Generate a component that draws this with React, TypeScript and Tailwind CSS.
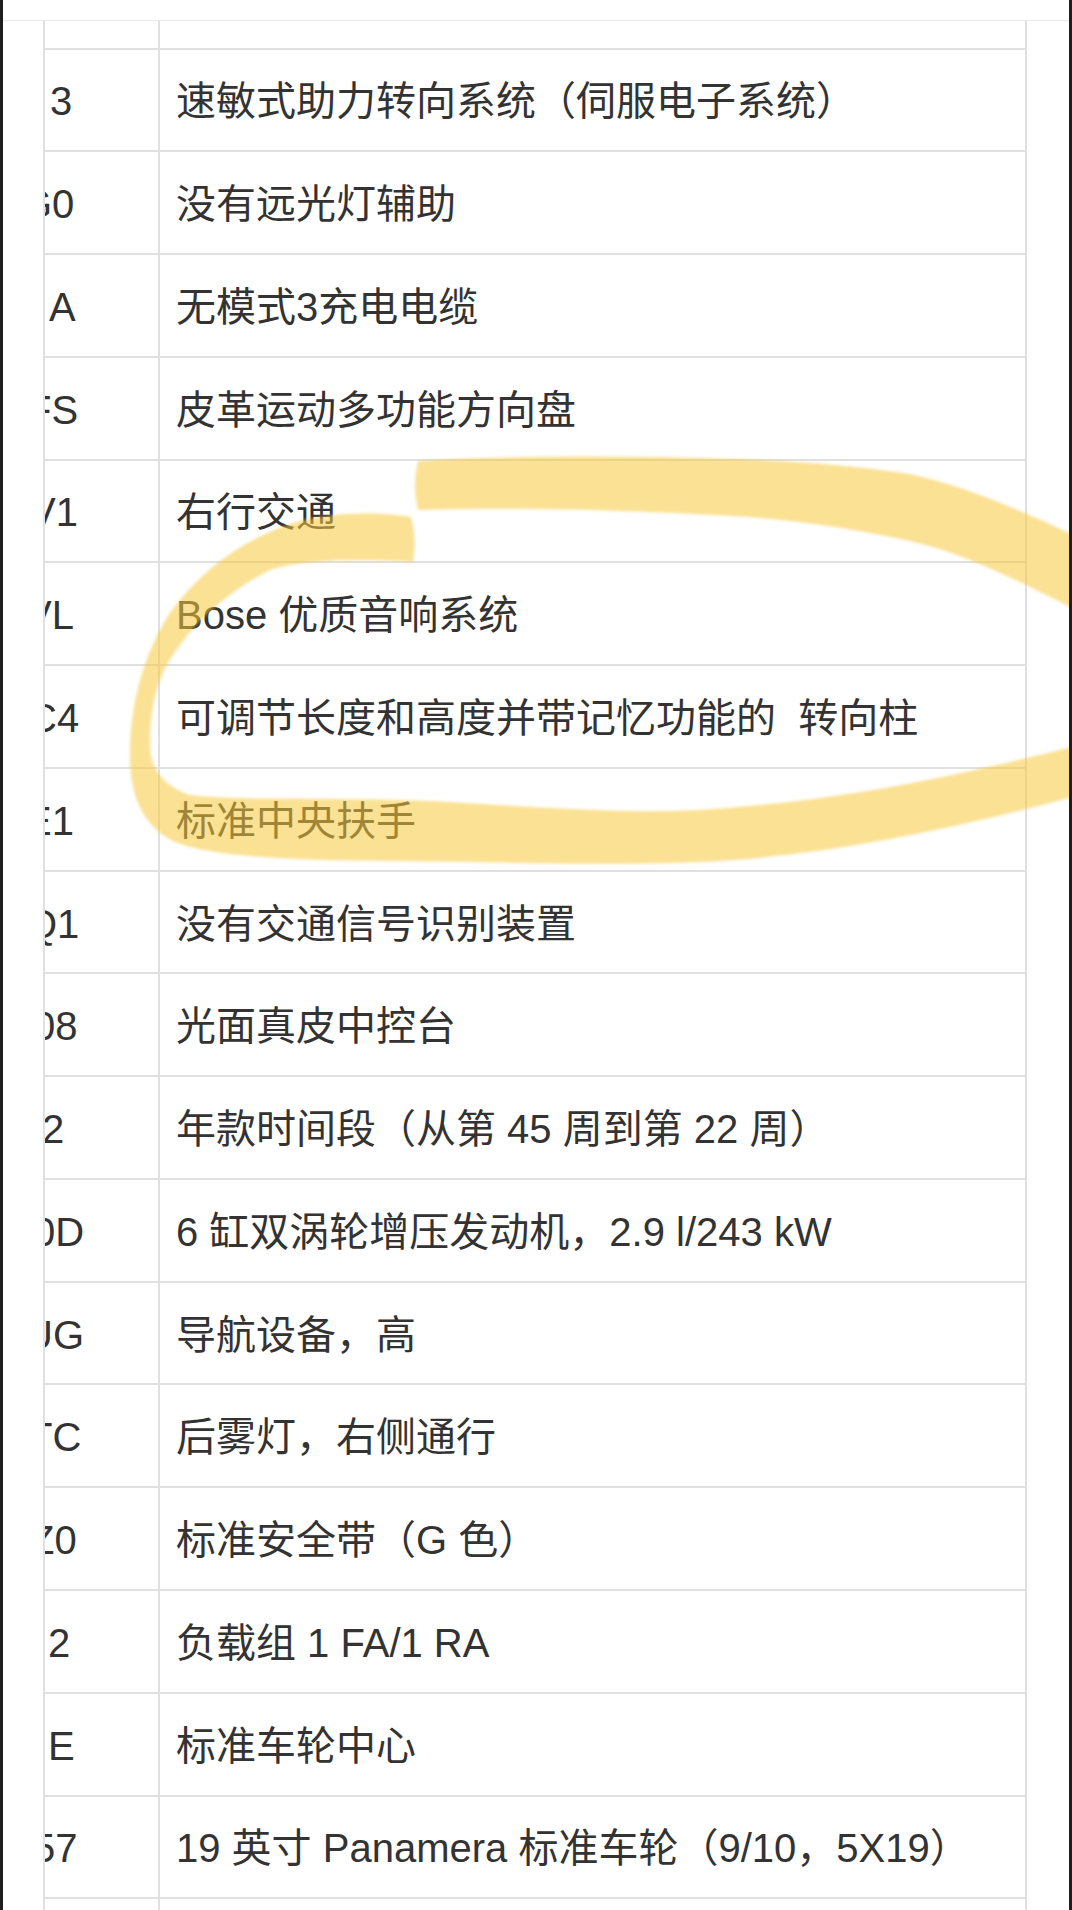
import React from 'react';

type Row = { code: string; shift: string; text: string };

const rows: Row[] = [
  { code: '3', shift: 'ml-[5px]', text: '速敏式助力转向系统（伺服电子系统）' },
  { code: 'G0', shift: 'ml-[-24px]', text: '没有远光灯辅助' },
  { code: 'A', shift: 'ml-[4px]', text: '无模式3充电电缆' },
  { code: 'FS', shift: 'ml-[-18px]', text: '皮革运动多功能方向盘' },
  { code: 'V1', shift: 'ml-[-16px]', text: '右行交通' },
  { code: 'VL', shift: 'ml-[-20px]', text: 'Bose 优质音响系统' },
  { code: 'C4', shift: 'ml-[-17px]', text: '可调节长度和高度并带记忆功能的  转向柱' },
  { code: 'E1', shift: 'ml-[-20px]', text: '标准中央扶手' },
  { code: 'Q1', shift: 'ml-[-19px]', text: '没有交通信号识别装置' },
  { code: '08', shift: 'ml-[-12px]', text: '光面真皮中控台' },
  { code: '2', shift: 'ml-[-3px]', text: '年款时间段（从第 45 周到第 22 周）' },
  { code: '0D', shift: 'ml-[-12px]', text: '6 缸双涡轮增压发动机，2.9 l/243 kW' },
  { code: 'UG', shift: 'ml-[-21px]', text: '导航设备，高' },
  { code: 'TC', shift: 'ml-[-17px]', text: '后雾灯，右侧通行' },
  { code: 'Z0', shift: 'ml-[-15px]', text: '标准安全带（G 色）' },
  { code: '2', shift: 'ml-[3px]', text: '负载组 1 FA/1 RA' },
  { code: 'E', shift: 'ml-[3px]', text: '标准车轮中心' },
  { code: '57', shift: 'ml-[-12px]', text: '19 英寸 Panamera 标准车轮（9/10，5X19）' },
];

const TableRow = ({ row, height }: { row?: Row; height: string }) => (
  <div className={`flex shrink-0 border-b-2 border-[#e0e0e0] ${height}`}>
    <div className="flex w-[115px] shrink-0 items-center overflow-hidden border-r-2 border-[#e0e0e0] pt-[3px]">
      {row && <span className={`whitespace-nowrap text-[40px] leading-none ${row.shift}`}>{row.code}</span>}
    </div>
    <div className="flex flex-1 items-center pl-[16px] pt-[3px]">
      {row && <span className="whitespace-pre text-[40px] leading-none">{row.text}</span>}
    </div>
  </div>
);

const Highlight = () => (
  <svg className="pointer-events-none absolute inset-0 h-full w-full" viewBox="0 0 1072 1910">
    <defs>
      <filter id="soft" x="-5%" y="-5%" width="110%" height="110%">
        <feGaussianBlur stdDeviation="1.6" />
      </filter>
    </defs>
    <g fill="rgb(246,200,60)" fillOpacity="0.55" filter="url(#soft)">
      <path d="M418,461 C500,456 620,455 733,459 C820,462 870,468 910,474 C960,485 1010,505 1080,538 L1080,612 C1020,582 970,555 910,541 C860,530 800,520 733,516 C620,509 500,507 418,510 Q412,486 418,461 Z" />
      <path d="M411,517 C380,512 330,511 290,524 C240,541 200,572 172,610 C145,650 131,700 130,750 C129,795 142,826 175,842 C215,858 300,860 400,861 C500,862 600,866 700,862 C820,857 950,830 1080,795 L1080,745 C960,775 850,800 700,810 C600,815 500,803 400,800 C300,798 230,800 190,795 C160,785 150,765 150,745 C150,700 160,670 180,645 C205,610 240,585 270,570 C300,560 360,558 413,562 Q417,540 411,517 Z" />
    </g>
  </svg>
);

export default function App() {
  return (
    <div className="relative flex h-[1910px] w-[1072px] overflow-hidden bg-white font-['Liberation_Sans','Noto_Sans_CJK_SC',sans-serif] text-[#333]">
      <div className="relative z-10 w-[3px] shrink-0 bg-[#1e1e1e]" />
      <div className="flex flex-1 flex-col">
        <div className="h-[21px] shrink-0 border-b border-[#e8e8e8]" />
        <div className="ml-[40px] flex w-[984px] flex-col border-x-2 border-[#e0e0e0]">
          <TableRow height="h-[28.5px]" />
          {rows.map((r, i) => (
            <TableRow key={i} row={r} height="h-[102.77px]" />
          ))}
          <TableRow height="h-[102.77px]" />
        </div>
      </div>
      <div className="relative z-10 w-[3px] shrink-0 bg-[#1e1e1e]" />
      <Highlight />
    </div>
  );
}
